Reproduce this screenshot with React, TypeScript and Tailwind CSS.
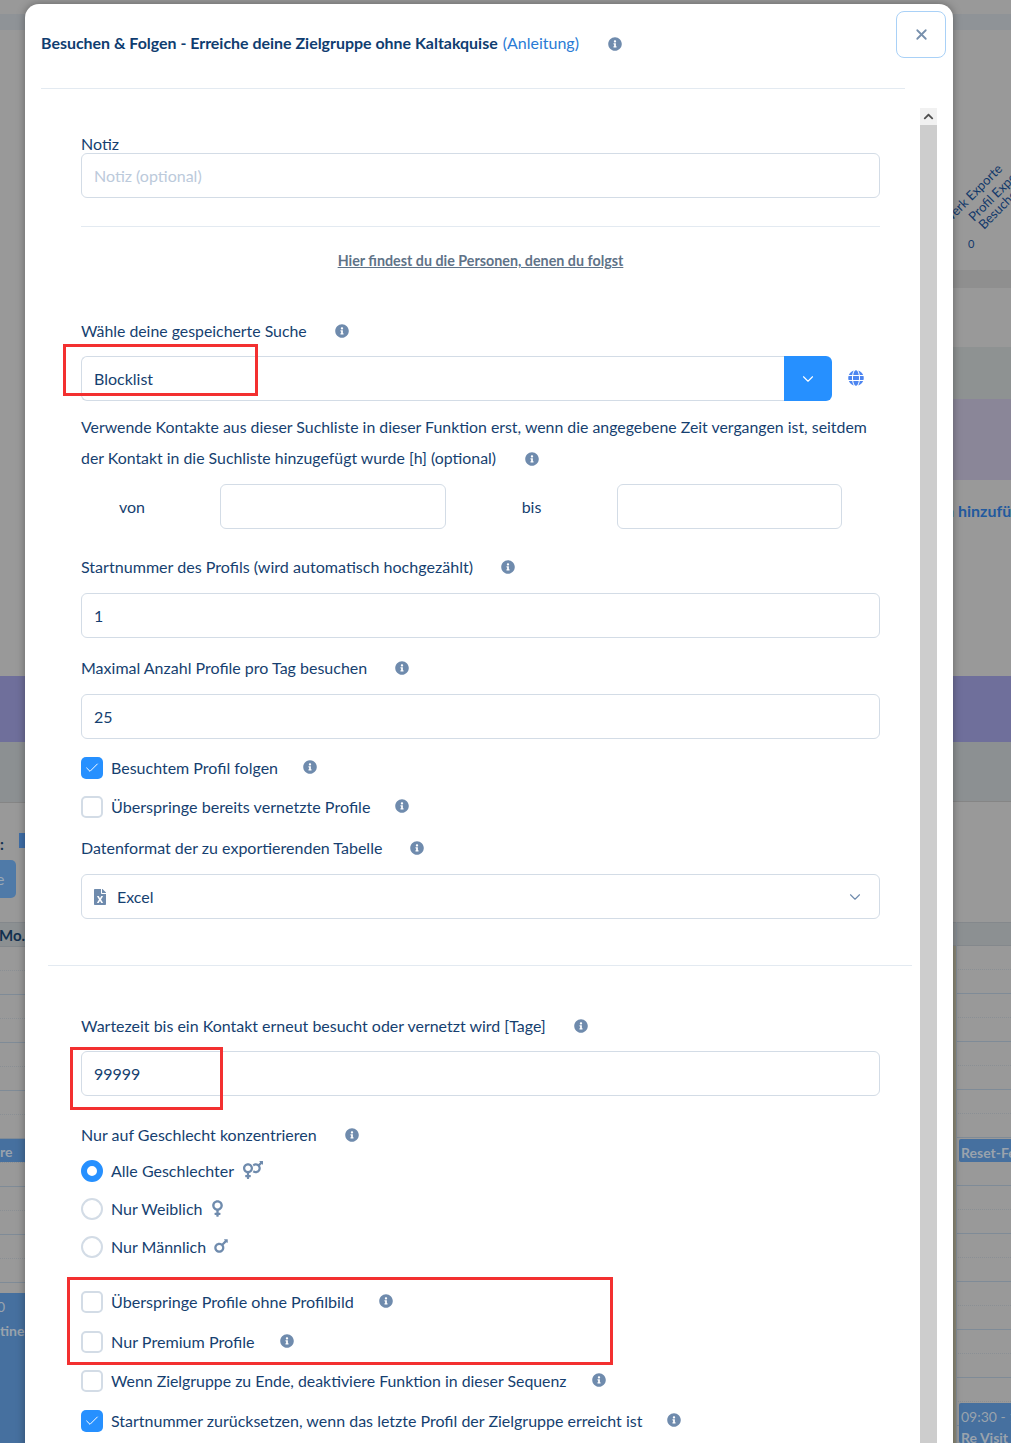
import React from "react";
import { FaInfoCircle, FaGlobe, FaFileExcel, FaVenusMars, FaVenus, FaMars, FaChevronUp } from "react-icons/fa";
import { ChevronDown, Check, X } from "lucide-react";

const Info = ({ className = "" }: { className?: string }) => (
  <FaInfoCircle className={`text-[#6f8bad] text-[14px] shrink-0 ${className}`} />
);

const Label = ({ text, className = "" }: { text: string; className?: string }) => (
  <div className={`flex items-center h-[24px] leading-[24px] ${className}`}>
    <span>{text}</span>
    <Info className="ml-[28px]" />
  </div>
);

const Input = ({ value, className = "" }: { value?: string; className?: string }) => (
  <div className={`h-[45px] border border-[#d3dce6] rounded-[6px] px-[12px] flex items-center text-[16px] text-[#163f70] bg-white ${className}`}>
    {value}
  </div>
);

const CheckRow = ({ on, text, className = "" }: { on?: boolean; text: string; className?: string }) => (
  <div className={`flex items-center h-[22px] ${className}`}>
    {on ? (
      <span className="w-[22px] h-[22px] rounded-[5px] bg-[#2690ff] flex items-center justify-center shrink-0">
        <Check size={16} strokeWidth={1.5} className="text-white" />
      </span>
    ) : (
      <span className="w-[22px] h-[22px] rounded-[5px] border-2 border-[#d3dce6] bg-white shrink-0" />
    )}
    <span className="ml-[8px]">{text}</span>
    <Info className="ml-[25px] -mt-[2px]" />
  </div>
);

const Radio = ({ on, text, icon, className = "" }: { on?: boolean; text: string; icon: React.ReactNode; className?: string }) => (
  <div className={`flex items-center h-[22px] text-[16px] ${className}`}>
    <span className={`w-[22px] h-[22px] rounded-full bg-white shrink-0 ${on ? "border-[6px] border-[#2690ff]" : "border-2 border-[#d3dce6]"}`} />
    <span className="ml-[8px]">{text}</span>
    {icon}
  </div>
);

const Rows = ({ n }: { n: number }) => (
  <>
    {Array.from({ length: n }).map((_, i) => (
      <div key={i} className="shrink-0">
        <div className="h-[24px] border-b border-dotted border-[#8a8f94]" />
        <div className="h-[24px] border-b border-[#7f8b97]" />
      </div>
    ))}
  </>
);

export default function App() {
  return (
    <div className="relative h-[1443px] w-[1011px] overflow-hidden bg-[#999999] font-['Lato','Noto_Sans',sans-serif] text-[#163f70]">
      {/* page behind the dialog */}
      <div className="flex justify-between h-full">
        <div className="relative w-[25px] flex flex-col overflow-hidden">
          <div className="h-[14px] shrink-0" />
          <div className="h-[16px] bg-[#8f9397] shrink-0" />
          <div className="h-[646px] shrink-0" />
          <div className="h-[66px] bg-[#6f6f9b] shrink-0" />
          <div className="h-[61px] bg-[#8c9092] border-b border-[#858585] shrink-0" />
          <div className="h-[119px] shrink-0" />
          <div className="h-[25px] bg-[#8c9092] border-y border-[#84888c] shrink-0 text-[15px] font-bold leading-[24px] text-[#12304f] whitespace-nowrap -indent-px">Mo.</div>
          <Rows n={10} />
          <div className="absolute left-[19px] top-[833px] w-[6px] h-[15px] bg-[#3f6ea8]" />
          <div className="absolute left-0 top-[833px] text-[15px] font-bold text-[#12304f]">:</div>
          <div className="absolute left-0 top-[860px] w-[16px] h-[38px] bg-[#4f7aa8] rounded-r-[5px] flex items-center overflow-hidden text-[16px] text-[#9aa8b5]">
            <span className="-ml-[4px]">e</span>
          </div>
          <div className="absolute left-0 top-[1139px] w-full h-[23px] bg-[#46709f] pt-[3px] overflow-hidden text-[14px] leading-[20px] font-bold text-[#9aa3ad]">re</div>
          <div className="absolute left-0 top-[1293px] w-full h-[150px] bg-[#46709f] text-[14px] text-[#9aa3ad] overflow-hidden">
            <div className="mt-[3px] -ml-[3px]">0</div>
            <div className="mt-[3px] font-bold whitespace-nowrap">tine</div>
          </div>
        </div>
        <div className="relative w-[58px] flex flex-col overflow-hidden">
          <div className="h-[14px] shrink-0" />
          <div className="h-[16px] bg-[#8f9397] shrink-0" />
          <div className="h-[240px] shrink-0" />
          <div className="h-[18px] bg-[#8f8f8f] shrink-0" />
          <div className="h-[59px] shrink-0" />
          <div className="h-[52px] bg-[#8e9292] shrink-0" />
          <div className="h-[81px] bg-[#8a8698] shrink-0" />
          <div className="h-[196px] shrink-0" />
          <div className="h-[66px] bg-[#6f6f9b] shrink-0" />
          <div className="h-[60px] bg-[#8c9092] border-b border-[#858585] shrink-0" />
          <div className="h-[120px] shrink-0" />
          <div className="h-[24px] bg-[#8c9092] border-y border-[#84888c] shrink-0" />
          <Rows n={10} />
          <div className="absolute left-[3px] top-[922px] bottom-0 w-px bg-[#868d95]" />
          <div className="absolute left-0 top-[946px] bottom-0 w-[3px] bg-[#8d8a78]" />
          <div className="absolute left-[-21px] top-[230px] text-[13px] leading-[15px] text-[#12386a] rotate-[-45deg] origin-bottom-left whitespace-nowrap">Netzwerk Exporte</div>
          <div className="absolute left-[23px] top-[209px] text-[13px] leading-[15px] text-[#12386a] rotate-[-45deg] origin-bottom-left whitespace-nowrap">Profil Exporte</div>
          <div className="absolute left-[33px] top-[217px] text-[13px] leading-[15px] text-[#12386a] rotate-[-45deg] origin-bottom-left whitespace-nowrap">Besuche</div>
          <div className="absolute left-[15px] top-[237px] text-[11px] leading-[14px] text-[#12386a]">0</div>
          <div className="absolute left-[-8px] top-[502px] text-[16px] leading-[18px] font-bold text-[#225a9e] whitespace-nowrap">n hinzufügen</div>
          <div className="absolute left-[6px] top-[1139px] w-[60px] h-[23px] bg-[#46709f] rounded-l-[2px] pl-[2px] text-[14px] leading-[27px] font-bold text-[#9aa3ad] whitespace-nowrap overflow-hidden">Reset-Feed</div>
          <div className="absolute left-[6px] top-[1403px] w-[60px] h-[40px] bg-[#46709f] rounded-l-[2px] pl-[2px] text-[14px] leading-[27px] text-[#9aa3ad] whitespace-nowrap overflow-hidden">09:30 - 10<div className="font-bold leading-[16px]">Re Visit</div></div>
        </div>
      </div>

      {/* dialog */}
      <div className="absolute left-[25px] top-[4px] w-[928px] h-[1500px] bg-white rounded-t-[14px] shadow-[0_0_8px_rgba(0,0,0,0.35)] text-[16px]">
        <div className="mx-[16px] w-[864px] h-[85px] border-b border-[#e3eaf1] pt-[28px] flex items-start">
          <span className="text-[15.95px] leading-[22px] font-bold text-[#0f3d70]">Besuchen &amp; Folgen - Erreiche deine Zielgruppe ohne Kaltakquise</span>
          <span className="ml-[5px] text-[16px] leading-[22px] text-[#2a7bd5]">(Anleitung)</span>
          <Info className="ml-[29px] mt-[5px]" />
        </div>
        <button className="absolute left-[871px] top-[7px] w-[50px] h-[47px] border border-[#a9d1f7] rounded-[8px] flex items-center justify-center bg-white">
          <X size={17} strokeWidth={2.5} className="text-[#7790ad]" />
        </button>

        <div className="flex mt-[19px]">
          <div className="w-[895px] pl-[56px] pr-[40px] shrink-0">
            <div className="h-[21px] mt-[24px] leading-[23px]">Notiz</div>
            <div className="h-[45px] border border-[#d3dce6] rounded-[6px] px-[12px] flex items-center text-[16px] text-[#bccadb]">Notiz (optional)</div>
            <div className="mt-[28px] border-t border-[#e3eaf1]" />
            <div className="mt-[24px] text-center text-[14.3px] leading-[20px] font-bold text-[#5f7388] underline">Hier findest du die Personen, denen du folgst</div>

            <Label text="Wähle deine gespeicherte Suche" className="mt-[48px] text-[15.85px]" />
            <div className="flex items-center mt-[13px]">
              <div className="w-[703px] h-[45px] border border-[#d3dce6] border-r-0 rounded-l-[6px] px-[12px] flex items-center">Blocklist</div>
              <div className="w-[48px] h-[45px] bg-[#2690ff] rounded-r-[6px] flex items-center justify-center">
                <ChevronDown size={18} strokeWidth={1.5} className="text-white" />
              </div>
              <FaGlobe className="ml-[16px] -mt-[2px] text-[16px] text-[#4d85f0]" />
            </div>
            <div className="mt-[10px] text-[15.86px] leading-[31px]">
              Verwende Kontakte aus dieser Suchliste in dieser Funktion erst, wenn die angegebene Zeit vergangen ist, seitdem der Kontakt in die Suchliste hinzugefügt wurde [h] (optional)
              <Info className="inline-block ml-[29px] -mt-[2px]" />
            </div>
            <div className="flex items-center mt-[11px]">
              <span className="w-[139px] pl-[38px]">von</span>
              <Input className="w-[226px]" />
              <span className="w-[171px] text-center">bis</span>
              <Input className="w-[225px]" />
            </div>

            <Label text="Startnummer des Profils (wird automatisch hochgezählt)" className="mt-[26px] text-[16.08px]" />
            <Input value="1" className="mt-[14px]" />
            <Label text="Maximal Anzahl Profile pro Tag besuchen" className="mt-[18px]" />
            <Input value="25" className="mt-[14px]" />
            <CheckRow on text="Besuchtem Profil folgen" className="mt-[18px]" />
            <CheckRow text="Überspringe bereits vernetzte Profile" className="mt-[17px] text-[16.12px]" />
            <Label text="Datenformat der zu exportierenden Tabelle" className="mt-[18px]" />
            <div className="mt-[14px] h-[45px] border border-[#d3dce6] rounded-[6px] pl-[12px] pr-[15px] flex items-center">
              <FaFileExcel className="text-[#6f8bad] text-[16px] -ml-[2px]" />
              <span className="ml-[9px] flex-1">Excel</span>
              <ChevronDown size={18} strokeWidth={1.5} className="text-[#6f8bad]" />
            </div>

            <div className="mt-[46px] -ml-[33px] w-[864px] border-t border-[#e3eaf1]" />

            <Label text="Wartezeit bis ein Kontakt erneut besucht oder vernetzt wird [Tage]" className="mt-[48px] text-[15.97px]" />
            <Input value="99999" className="mt-[13px]" />
            <Label text="Nur auf Geschlecht konzentrieren" className="mt-[27px]" />
            <Radio on text="Alle Geschlechter" icon={<FaVenusMars className="ml-[9px] text-[#6f8bad] text-[20px] -mt-[2px]" />} className="mt-[13px]" />
            <Radio text="Nur Weiblich" icon={<FaVenus className="ml-[6px] text-[#6f8bad] text-[19px] -mt-[2px]" />} className="mt-[16px]" />
            <Radio text="Nur Männlich" icon={<FaMars className="ml-[6px] text-[#6f8bad] text-[18px] -mt-[2px]" />} className="mt-[16px]" />
            <CheckRow text="Überspringe Profile ohne Profilbild" className="mt-[33px] text-[16.13px]" />
            <CheckRow text="Nur Premium Profile" className="mt-[18px] text-[16.15px]" />
            <CheckRow text="Wenn Zielgruppe zu Ende, deaktiviere Funktion in dieser Sequenz" className="mt-[17px] text-[15.86px]" />
            <CheckRow on text="Startnummer zurücksetzen, wenn das letzte Profil der Zielgruppe erreicht ist" className="mt-[18px]" />
          </div>
          <div className="w-[17px] bg-[#cdcdcd] h-[1400px] shrink-0">
            <div className="h-[17px] bg-[#f1f1f1] flex items-center justify-center">
              <FaChevronUp className="text-[#505050] text-[11px]" />
            </div>
          </div>
        </div>
      </div>

      {/* red annotation boxes */}
      <div className="absolute left-[63px] top-[344px] w-[195px] h-[52px] border-[3px] border-[#f33030]" />
      <div className="absolute left-[70px] top-[1047px] w-[153px] h-[63px] border-[3px] border-[#f33030]" />
      <div className="absolute left-[67px] top-[1277px] w-[546px] h-[88px] border-[3px] border-[#f33030]" />
    </div>
  );
}
